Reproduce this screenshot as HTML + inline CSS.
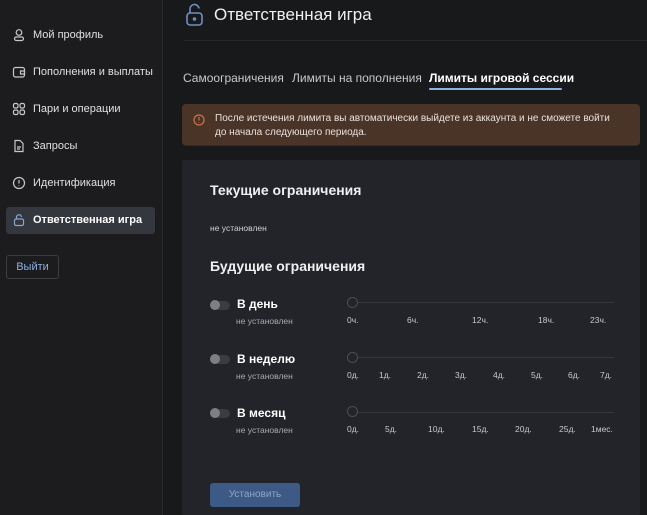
<!DOCTYPE html>
<html><head><meta charset="utf-8"><style>
*{margin:0;padding:0;box-sizing:border-box}
html,body{width:647px;height:515px;overflow:hidden}
body{background:#18191b;font-family:"Liberation Sans",sans-serif;color:#e4e4e6;position:relative}
.sb{position:absolute;left:0;top:0;width:163px;height:515px;background:#1c1c1e;border-right:1px solid #2a2b2e}
.it{position:absolute;left:12px;font-size:11px;color:#e0e0e2;display:flex;align-items:center;gap:7px}
.it svg{width:14px;height:14px}
.act{position:absolute;left:6px;top:207px;width:149px;height:27px;background:#34373d;border-radius:3px}
.out{position:absolute;left:6px;top:255px;width:53px;height:24px;border:1px solid #3a3d42;border-radius:3px;color:#8fb0e0;font-size:11px;text-align:center;line-height:22px}
.t{position:absolute;white-space:nowrap}
.card{position:absolute;left:182px;top:160px;width:458px;height:355px;background:#222429;border-radius:2px}
.alert{position:absolute;left:182px;top:104px;width:458px;height:42px;background:#4a3427;border-radius:4px;border-bottom:1px solid #23303c}
.tog{position:absolute;left:210px;width:20px;height:9px;border-radius:5px;background:#3a3c41}
.tog::after{content:"";position:absolute;left:0;top:-1px;width:10px;height:10px;border-radius:50%;background:#7d7f83}
.track{position:absolute;left:352px;width:262px;height:1px;background:#34373c}
.thumb{position:absolute;left:347px;width:11px;height:11px;border-radius:50%;border:1px solid #4a4d52;background:#222429}
.lab{position:absolute;font-size:8.5px;color:#c8c9cc}
.sub{font-size:8.5px;color:#a8aaae}
</style></head><body>
<div class="sb">
<div class="act"></div>
<div class="it" style="top:28px"><svg viewBox="0 0 14 14" fill="none" stroke="#c8c8cc" stroke-width="1.2"><circle cx="7" cy="4.5" r="2.8"/><rect x="2.5" y="9" width="9" height="3.5" rx="1.7"/></svg>Мой профиль</div>
<div class="it" style="top:65px"><svg viewBox="0 0 14 14" fill="none" stroke="#c8c8cc" stroke-width="1.2"><rect x="1.5" y="2.5" width="11" height="9.5" rx="2"/><path d="M8.5 6h4v3h-4z"/></svg>Пополнения и выплаты</div>
<div class="it" style="top:102px"><svg viewBox="0 0 14 14" fill="none" stroke="#c8c8cc" stroke-width="1.2"><rect x="1.5" y="1.5" width="4.5" height="4.5" rx="1.5"/><rect x="8" y="1.5" width="4.5" height="4.5" rx="1.5"/><rect x="1.5" y="8" width="4.5" height="4.5" rx="1.5"/><rect x="8" y="8" width="4.5" height="4.5" rx="1.5"/></svg>Пари и операции</div>
<div class="it" style="top:139px"><svg viewBox="0 0 14 14" fill="none" stroke="#c8c8cc" stroke-width="1.2"><path d="M3 1.5h5l3 3v8H3z"/><path d="M5 8h4M5 10h3"/></svg>Запросы</div>
<div class="it" style="top:176px"><svg viewBox="0 0 14 14" fill="none" stroke="#c8c8cc" stroke-width="1.2"><circle cx="7" cy="7" r="5.5"/><path d="M7 4v3.5M7 9.5v.5"/></svg>Идентификация</div>
<div class="it" style="top:213px;font-weight:bold;color:#fff"><svg viewBox="0 0 14 14" fill="none" stroke="#8aa6d0" stroke-width="1.2"><rect x="2.5" y="6" width="9" height="6.5" rx="1.5"/><path d="M4.5 6V4.5a2.5 2.5 0 0 1 5 -0.5"/></svg>Ответственная игра</div>
<div class="out">Выйти</div>
</div>
<svg style="position:absolute;left:185px;top:3px" width="20" height="24" viewBox="0 0 20 24" fill="none" stroke="#6f8fbf" stroke-width="1.6"><rect x="2" y="10" width="15" height="12" rx="3"/><path d="M5 10V6.5a4.5 4.5 0 0 1 9 -1"/><circle cx="9.5" cy="16" r="1"/></svg>
<div class="t" style="left:214px;top:5px;font-size:17px;color:#f0f0f2">Ответственная игра</div>
<div style="position:absolute;left:184px;top:40px;width:463px;height:1px;background:#26272a"></div>
<div class="t" style="left:183px;top:71px;font-size:12px;color:#c8c9cc">Самоограничения</div>
<div class="t" style="left:292px;top:71px;font-size:12px;color:#c8c9cc">Лимиты на пополнения</div>
<div class="t" style="left:429px;top:71px;font-size:12px;color:#fff;font-weight:bold">Лимиты игровой сессии</div>
<div style="position:absolute;left:429px;top:88px;width:133px;height:2px;background:#8fb0e0;border-radius:1px"></div>
<div class="alert"></div>
<svg style="position:absolute;left:193px;top:114px" width="12" height="12" viewBox="0 0 12 12" fill="none" stroke="#d0714a" stroke-width="1.2"><circle cx="6" cy="6" r="5"/><path d="M6 3v3.5M6 8v.5"/></svg>
<div class="t" style="left:215px;top:112px;font-size:10px;line-height:14px;color:#e8e2de">После истечения лимита вы автоматически выйдете из аккаунта и не сможете войти<br>до начала следующего периода.</div>
<div class="card"></div>
<div class="t" style="left:210px;top:182px;font-size:14px;font-weight:bold;color:#f0f0f2">Текущие ограничения</div>
<div class="t sub" style="left:210px;top:223px;color:#d0d1d4">не установлен</div>
<div class="t" style="left:210px;top:258px;font-size:14px;font-weight:bold;color:#f0f0f2">Будущие ограничения</div>

<div class="tog" style="top:301px"></div>
<div class="t" style="left:237px;top:297px;font-size:12px;font-weight:bold;color:#fff">В день</div>
<div class="t sub" style="left:236px;top:316px">не установлен</div>
<div class="track" style="top:302px"></div><div class="thumb" style="top:297px"></div>
<div class="lab" style="left:347px;top:315px">0ч.</div><div class="lab" style="left:407px;top:315px">6ч.</div><div class="lab" style="left:472px;top:315px">12ч.</div><div class="lab" style="left:538px;top:315px">18ч.</div><div class="lab" style="left:590px;top:315px">23ч.</div>

<div class="tog" style="top:355px"></div>
<div class="t" style="left:237px;top:352px;font-size:12px;font-weight:bold;color:#fff">В неделю</div>
<div class="t sub" style="left:236px;top:371px">не установлен</div>
<div class="track" style="top:357px"></div><div class="thumb" style="top:352px"></div>
<div class="lab" style="left:347px;top:370px">0д.</div><div class="lab" style="left:379px;top:370px">1д.</div><div class="lab" style="left:417px;top:370px">2д.</div><div class="lab" style="left:455px;top:370px">3д.</div><div class="lab" style="left:493px;top:370px">4д.</div><div class="lab" style="left:531px;top:370px">5д.</div><div class="lab" style="left:568px;top:370px">6д.</div><div class="lab" style="left:600px;top:370px">7д.</div>

<div class="tog" style="top:409px"></div>
<div class="t" style="left:237px;top:406px;font-size:12px;font-weight:bold;color:#fff">В месяц</div>
<div class="t sub" style="left:236px;top:425px">не установлен</div>
<div class="track" style="top:412px"></div><div class="thumb" style="top:406px"></div>
<div class="lab" style="left:347px;top:424px">0д.</div><div class="lab" style="left:385px;top:424px">5д.</div><div class="lab" style="left:428px;top:424px">10д.</div><div class="lab" style="left:472px;top:424px">15д.</div><div class="lab" style="left:515px;top:424px">20д.</div><div class="lab" style="left:559px;top:424px">25д.</div><div class="lab" style="left:591px;top:424px">1мес.</div>

<div style="position:absolute;left:210px;top:483px;width:90px;height:24px;background:#3d5a86;border-radius:3px;color:#8ea6c6;font-size:10px;text-align:center;line-height:24px">Установить</div>
</body></html>
